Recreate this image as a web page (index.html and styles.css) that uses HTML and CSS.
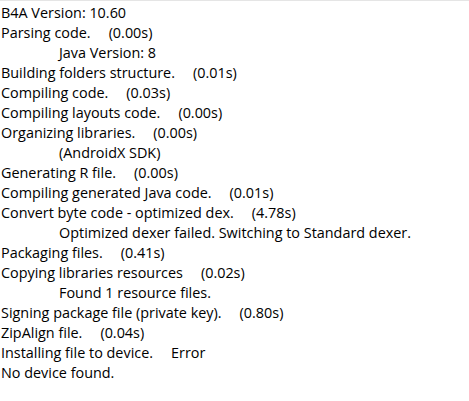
FILE: index.html
```html
<!DOCTYPE html>
<html>
<head>
<meta charset="utf-8">
<link rel="stylesheet" href="styles.css">
</head>
<body>
<div class="log">
  <div class="line">B4A Version: 10.60</div>
  <div class="line">Parsing code.<span class="time">(0.00s)</span></div>
  <div class="line sub">Java Version: 8</div>
  <div class="line">Building folders structure.<span class="time">(0.01s)</span></div>
  <div class="line">Compiling code.<span class="time">(0.03s)</span></div>
  <div class="line">Compiling layouts code.<span class="time">(0.00s)</span></div>
  <div class="line">Organizing libraries.<span class="time">(0.00s)</span></div>
  <div class="line sub">(AndroidX SDK)</div>
  <div class="line">Generating R file.<span class="time">(0.00s)</span></div>
  <div class="line">Compiling generated Java code.<span class="time">(0.01s)</span></div>
  <div class="line">Convert byte code - optimized dex.<span class="time">(4.78s)</span></div>
  <div class="line sub">Optimized dexer failed. Switching to Standard dexer.</div>
  <div class="line">Packaging files.<span class="time">(0.41s)</span></div>
  <div class="line">Copying libraries resources<span class="time">(0.02s)</span></div>
  <div class="line sub">Found 1 resource files.</div>
  <div class="line">Signing package file (private key).<span class="time">(0.80s)</span></div>
  <div class="line">ZipAlign file.<span class="time">(0.04s)</span></div>
  <div class="line">Installing file to device.<span class="time">Error</span></div>
  <div class="line">No device found.</div>
</div>
</body>
</html>
```
FILE: styles.css
```css
html, body {
  margin: 0;
  padding: 0;
  background: #ffffff;
}
.log {
  border-top: 1px solid #e5e5e5;
  padding: 2px 0 0 1px;
  font-family: "Open Sans", sans-serif;
  font-size: 14.4px;
  color: #000000;
}
.line {
  height: 20px;
  line-height: 20px;
  white-space: nowrap;
}
.sub {
  padding-left: 58px;
}
.time {
  margin-left: 18px;
}
```
